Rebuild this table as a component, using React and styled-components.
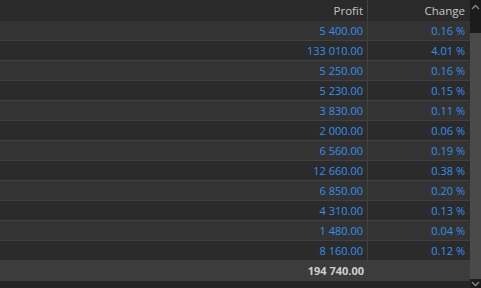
import React from 'react';
import styled, { createGlobalStyle } from 'styled-components';

const rows = [
  ['5 400.00', '0.16 %'],
  ['133 010.00', '4.01 %'],
  ['5 250.00', '0.16 %'],
  ['5 230.00', '0.15 %'],
  ['3 830.00', '0.11 %'],
  ['2 000.00', '0.06 %'],
  ['6 560.00', '0.19 %'],
  ['12 660.00', '0.38 %'],
  ['6 850.00', '0.20 %'],
  ['4 310.00', '0.13 %'],
  ['1 480.00', '0.04 %'],
  ['8 160.00', '0.12 %'],
];

const Global = createGlobalStyle`
  html, body { margin: 0; padding: 0; background: #262626; }
  body { font-family: "Open Sans", "Noto Sans", sans-serif; }
`;

const Frame = styled.div`
  width: 481px;
  height: 288px;
  display: flex;
  overflow: hidden;
  background: #262626;
`;

const Table = styled.div`
  flex: 1;
  display: flex;
  flex-direction: column;
`;

const Row = styled.div`
  display: grid;
  grid-template-columns: 1fr 102px;
  height: ${p => p.$h || 20}px;
  background: ${p => p.$bg};
  border-bottom: 1px solid ${p => p.$line || '#404040'};
  box-sizing: border-box;
  flex-shrink: 0;
`;

const Cell = styled.div`
  display: flex;
  align-items: center;
  justify-content: flex-end;
  padding-right: ${p => p.$pr || 4}px;
  font-size: ${p => (p.$head ? 11.5 : 11)}px;
  color: ${p => p.$color || '#3090f0'};
  font-weight: ${p => (p.$bold ? 700 : 400)};
  border-right: ${p => (p.$divider ? '1px solid #404040' : 'none')};
  white-space: nowrap;
`;

const Rest = styled.div`
  flex: 1;
  background: #252525;
`;

const Scrollbar = styled.div`
  width: 11px;
  background: #1c1c1c;
  display: flex;
  flex-direction: column;
  align-items: center;
`;

const Arrow = styled.div`
  height: ${p => p.$h || 14}px;
  width: 11px;
  display: flex;
  align-items: ${p => (p.$top ? 'flex-start' : 'center')};
  justify-content: center;
  flex-shrink: 0;
`;

const Track = styled.div`
  flex: 1;
  width: 11px;
  padding: 19px 0 2px;
  box-sizing: border-box;
  display: flex;
`;

const Thumb = styled.div`
  width: 11px;
  background: #4a4a4a;
  height: 246px;
`;

const Chevron = ({ down }) => (
  <svg width="9" height="6" viewBox="0 0 9 6" style={{ transform: down ? 'rotate(180deg)' : undefined }}>
    <path d="M1 5 L4.5 1.5 L8 5" fill="none" stroke="#8a8a8a" strokeWidth="1.3" />
  </svg>
);

export default function App() {
  return (
    <>
      <Global />
      <Frame>
        <Table>
          <Row $h={21} $bg="#2a2a2a" $line="#2a2a2a">
            <Cell $divider $head $color="#c6c6c6">Profit</Cell>
            <Cell $head $color="#c6c6c6" $pr={5}>Change</Cell>
          </Row>
          {rows.map(([p, c], i) => (
            <Row key={i} $bg={i % 2 === 0 ? '#333333' : '#2b2b2b'}>
              <Cell $divider>{p}</Cell>
              <Cell $pr={5}>{c}</Cell>
            </Row>
          ))}
          <Row $bg="#3c3c3c" $line="#3c3c3c">
            <Cell $bold $color="#cfcfcf">194 740.00</Cell>
            <Cell />
          </Row>
          <Rest />
        </Table>
        <Scrollbar>
          <Arrow><Chevron /></Arrow>
          <Track><Thumb /></Track>
          <Arrow $h={7} $top><Chevron down /></Arrow>
        </Scrollbar>
      </Frame>
    </>
  );
}
